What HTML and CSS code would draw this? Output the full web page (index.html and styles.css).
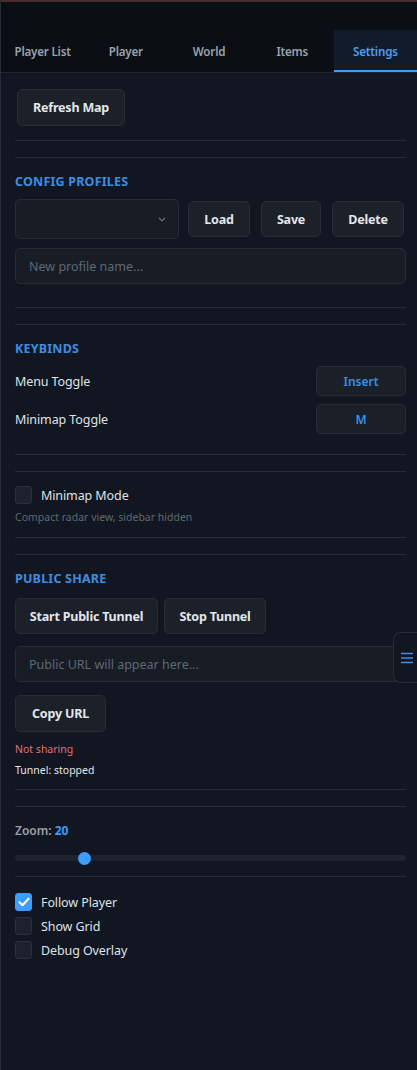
FILE: index.html
```html
<!DOCTYPE html>
<html lang="en">
<head>
<meta charset="utf-8">
<title>Map Panel — Settings</title>
<link rel="stylesheet" href="styles.css">
</head>
<body>
<div class="panel">
  <header class="topbar"></header>
  <nav class="tabs">
    <button class="tab">Player List</button>
    <button class="tab">Player</button>
    <button class="tab">World</button>
    <button class="tab">Items</button>
    <button class="tab active">Settings</button>
  </nav>

  <main class="content">
    <section class="group first">
      <button class="btn refresh">Refresh Map</button>
    </section>

    <section class="group profiles">
      <h3 class="heading">Config Profiles</h3>
      <div class="profile-row">
        <div class="select-wrap">
          <select class="select"><option></option></select>
          <svg class="chevron" width="8" height="5" viewBox="0 0 8 5"><path d="M1 1l3 3 3-3" fill="none" stroke="#6b7380" stroke-width="1.2"/></svg>
        </div>
        <button class="btn small load">Load</button>
        <button class="btn small save">Save</button>
        <button class="btn small delete">Delete</button>
      </div>
      <input class="field" type="text" placeholder="New profile name...">
    </section>

    <section class="group keybinds">
      <h3 class="heading">Keybinds</h3>
      <div class="bind-row">
        <span class="label">Menu Toggle</span>
        <button class="key">Insert</button>
      </div>
      <div class="bind-row">
        <span class="label">Minimap Toggle</span>
        <button class="key">M</button>
      </div>
    </section>

    <section class="group minimap">
      <label class="check"><span class="box"></span><span class="label">Minimap Mode</span></label>
      <p class="hint">Compact radar view, sidebar hidden</p>
    </section>

    <section class="group share">
      <h3 class="heading">Public Share</h3>
      <div class="share-row">
        <button class="btn start">Start Public Tunnel</button>
        <button class="btn stop">Stop Tunnel</button>
      </div>
      <input class="field url" type="text" placeholder="Public URL will appear here...">
      <button class="btn copy">Copy URL</button>
      <p class="status off">Not sharing</p>
      <p class="status">Tunnel: stopped</p>
    </section>

    <section class="group zoom">
      <div class="zoom-label">Zoom: <b>20</b></div>
      <input class="range" type="range" min="5" max="95" value="20">
    </section>

    <section class="toggles">
      <label class="check"><span class="box on"><svg width="12" height="10" viewBox="0 0 12 10"><path d="M1.5 5.2l3 3 6-6.4" fill="none" stroke="#fff" stroke-width="2" stroke-linecap="round" stroke-linejoin="round"/></svg></span><span class="label">Follow Player</span></label>
      <label class="check"><span class="box"></span><span class="label">Show Grid</span></label>
      <label class="check"><span class="box"></span><span class="label">Debug Overlay</span></label>
    </section>
  </main>

  <button class="handle" aria-label="Toggle sidebar">
    <svg width="12" height="12" viewBox="0 0 12 12"><path d="M0 1.5h12M0 6h12M0 10.5h12" stroke="#3b8fe6" stroke-width="1.6"/></svg>
  </button>
</div>
</body>
</html>
```

FILE: styles.css
```css
* { box-sizing: border-box; }

html, body {
  margin: 0;
  padding: 0;
  background: #111620;
}

body {
  font-family: "Noto Sans", "Open Sans", sans-serif;
  color: #dfe3e8;
  font-size: 13px;
}

.panel {
  position: relative;
  width: 417px;
  min-height: 1070px;
  background: #111620;
  border-left: 1px solid #262b34;
}

.topbar {
  height: 30px;
  background: #0b0e14;
  border-top: 2px solid #4a2c2c;
}

.tabs {
  display: flex;
  height: 43px;
  background: #0b0e14;
  border-bottom: 1px solid #1f2630;
}

.tab {
  flex: 1;
  border: 0;
  background: transparent;
  color: #9aa2ad;
  font: 600 11.6px "Noto Sans", sans-serif;
  padding: 3px 0 0;
  border-bottom: 2px solid transparent;
  letter-spacing: -0.2px;
}

.tab.active {
  background: #111b2a;
  color: #4a9ef0;
  border-bottom-color: #3b9eff;
}

.content {
  padding: 16px 11px 0 14px;
}

.group {
  border-top: 1px solid #262c36;
  border-bottom: 1px solid #262c36;
  margin-bottom: 16px;
  padding: 15px 0 18px;
}

.group.first {
  border-top: 0;
  padding: 0 0 14px 2px;
}

.profiles { padding-bottom: 23px; }
.keybinds { padding-bottom: 20px; }

.heading {
  margin: 0 0 8px;
  color: #3b8fe0;
  font-size: 12.5px;
  font-weight: 700;
  text-transform: uppercase;
  letter-spacing: 0.2px;
  line-height: 18px;
}

.btn {
  height: 36px;
  padding: 0;
  background: #1b2029;
  border: 1px solid #272d37;
  border-radius: 5px;
  color: #e3e6ea;
  font: 700 12.5px "Noto Sans", sans-serif;
  letter-spacing: -0.2px;
  white-space: nowrap;
}

.refresh {
  height: 37px;
  width: 108px;
}

.profile-row {
  display: flex;
  align-items: center;
  margin-bottom: 9px;
}

.select-wrap {
  position: relative;
  width: 164px;
  height: 40px;
}

.select {
  appearance: none;
  -webkit-appearance: none;
  width: 100%;
  height: 100%;
  background: #171c25;
  border: 1px solid #272d37;
  border-radius: 5px;
}

.chevron {
  position: absolute;
  right: 13px;
  top: 18px;
}

.load { width: 62px; margin-left: 9px; }
.save { width: 60px; margin-left: 11px; }
.delete { width: 72px; margin-left: 11px; }

.field {
  display: block;
  width: 100%;
  height: 36px;
  padding: 0 13px;
  background: #171c25;
  border: 1px solid #272d37;
  border-radius: 5px;
  color: #dfe3e8;
  font: 12.5px "Noto Sans", sans-serif;
}

.field::placeholder { color: #5f6876; }

.bind-row {
  display: flex;
  align-items: center;
  justify-content: space-between;
  margin-bottom: 8px;
}

.bind-row:last-child { margin-bottom: 0; }

.label {
  color: #dfe3e8;
  font-size: 12.5px;
  letter-spacing: -0.1px;
}

.key {
  width: 90px;
  height: 30px;
  background: #1a1f28;
  border: 1px solid #272d37;
  border-radius: 5px;
  color: #3b8fe0;
  font: 600 12px "Noto Sans", sans-serif;
}

.minimap { padding: 11px 0 13px; }

.check {
  display: flex;
  align-items: center;
  gap: 9px;
  height: 24px;
}

.box {
  display: flex;
  align-items: center;
  justify-content: center;
  width: 17px;
  height: 18px;
  border-radius: 3px;
  background: #1c222c;
  border: 1px solid #2a313c;
}

.box.on {
  background: #3b9eff;
  border-color: #3b9eff;
}

.hint {
  margin: 3px 0 0;
  color: #5f6876;
  font-size: 10.5px;
}

.share { padding-bottom: 8px; }

.share-row {
  display: flex;
  gap: 6px;
  padding-top: 2px;
  margin-bottom: 12px;
}

.start { width: 143px; }
.stop { width: 102px; }

.url { margin-bottom: 13px; }

.copy {
  width: 91px;
  height: 37px;
}

.status {
  margin: 0;
  font-size: 10.5px;
  line-height: 21px;
  color: #e6e8eb;
}

.status.off {
  margin-top: 7px;
  color: #e0707c;
}

.zoom {
  padding: 15px 0 11px;
  margin-bottom: 13px;
}

.zoom-label {
  color: #9aa2ad;
  font-size: 12px;
  font-weight: 600;
  margin-bottom: 12px;
}

.zoom-label b { color: #3b9eff; font-weight: 700; }

.range {
  -webkit-appearance: none;
  appearance: none;
  display: block;
  width: 100%;
  height: 14px;
  margin: 0;
  background: transparent;
}

.range::-webkit-slider-runnable-track {
  height: 6px;
  border-radius: 3px;
  background: #1e242e;
}

.range::-webkit-slider-thumb {
  -webkit-appearance: none;
  width: 13px;
  height: 13px;
  margin-top: -3.5px;
  border-radius: 50%;
  background: #3b9eff;
  border: 0;
}

.handle {
  position: absolute;
  top: 632px;
  right: 0;
  width: 24px;
  height: 51px;
  display: flex;
  align-items: center;
  justify-content: center;
  padding: 0 0 0 2px;
  background: #111620;
  border: 1px solid #272d37;
  border-right: 0;
  border-radius: 8px 0 0 8px;
}
```
